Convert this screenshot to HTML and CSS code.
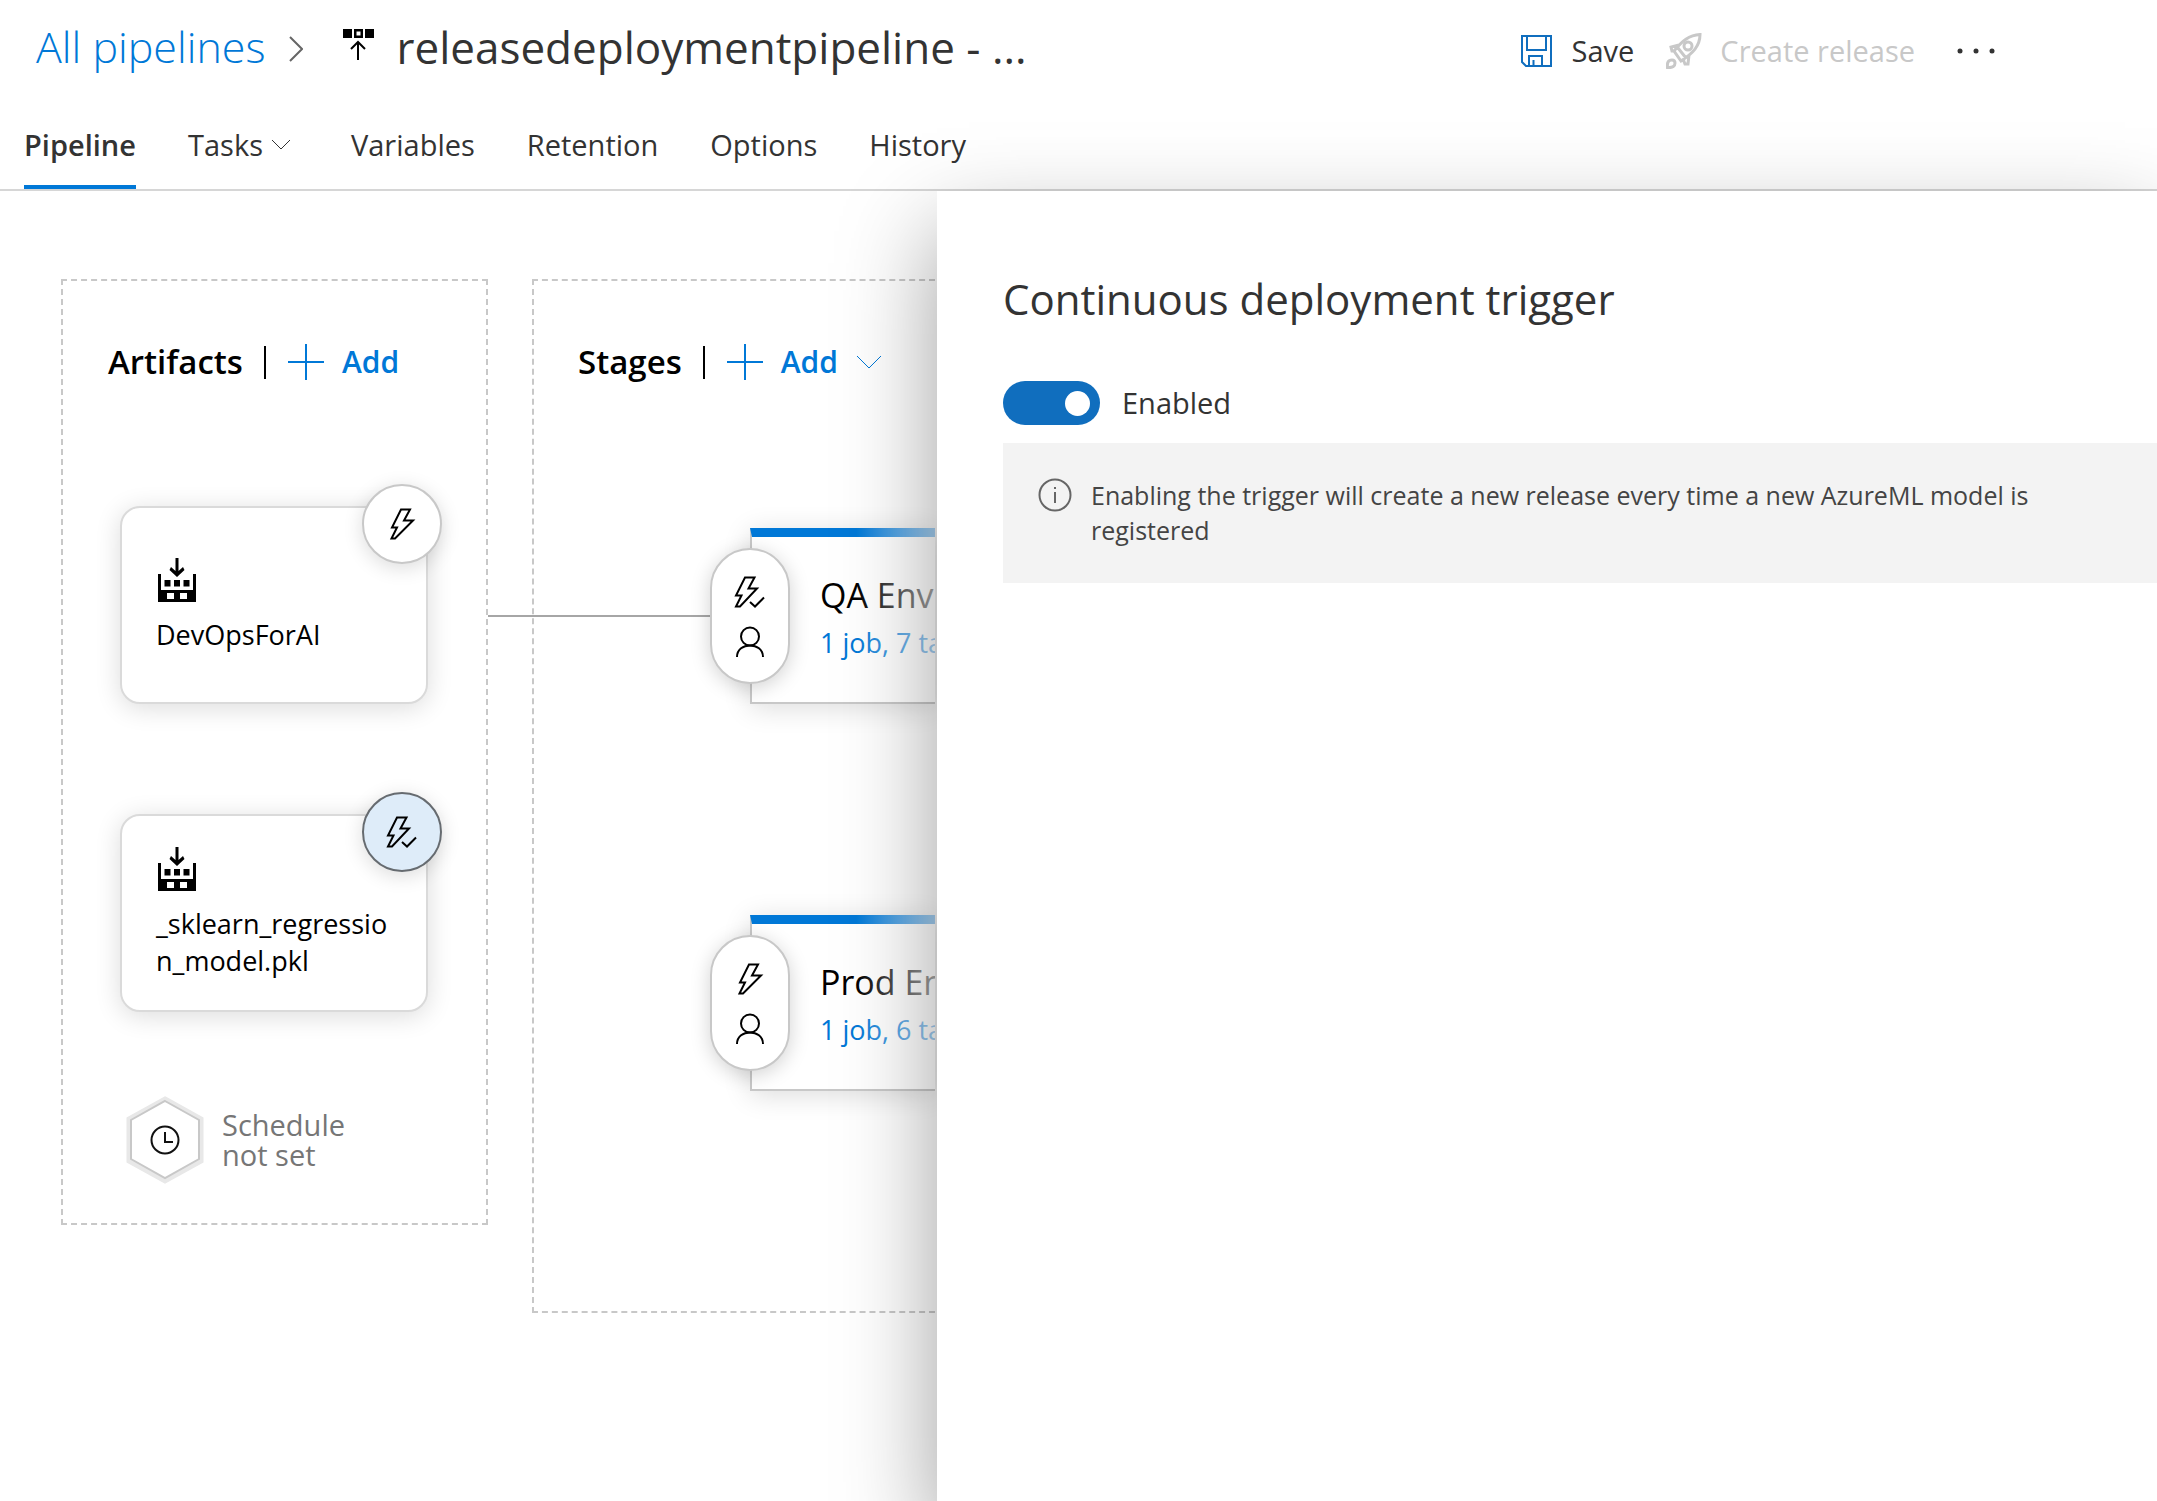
FILE: index.html
```html
<!DOCTYPE html>
<html lang="en">
<head>
<meta charset="utf-8">
<title>releasedeploymentpipeline</title>
<link rel="stylesheet" href="styles.css">
</head>
<body>
<svg class="sprite" aria-hidden="true">
  <symbol id="bolt" viewBox="-4 0 32 32"><path d="M11 1.500H20L14 12.500H23L5 30.500H1.500L7 19.500H2Z"/></symbol>
  <symbol id="bolt-check" viewBox="0 0 32 32"><path d="M11 1.500H20.500L14.500 12.500H23L6 30.500H2L7.500 19.500H2ZM16 26L21 30.500L30 21.500"/></symbol>
  <symbol id="person" viewBox="0 0 32 32"><circle cx="16" cy="10.500" r="9"/><path d="M3 31C3 15.500 29 15.500 29 31"/></symbol>
  <symbol id="plus" viewBox="0 0 36 36"><path d="M18 0V36M0 18H36"/></symbol>
  <symbol id="build" viewBox="0 0 38 44"><path d="M17.500 0H20.500V13L25 9L26.500 12L19 19L11.500 12L13 9L17.500 13ZM0 16H3V32H35V16H38V44H0ZM6.500 22H12.500V28.500H6.500ZM16 22H22V28.500H16ZM25.500 22H31.500V28.500H25.500ZM9 35V41H16V35ZM22 35V41H29V35Z" fill-rule="evenodd"/></symbol>
</svg>
<header class="header">
  <div class="title-row">
    <nav class="crumbs" aria-label="Breadcrumb">
      <a class="crumb-link" href="#">All pipelines</a>
      <svg class="crumb-sep" viewBox="0 0 14 26"><path d="M1 1L13 13L1 25"/></svg>
      <svg class="release-icon" viewBox="0 0 31 32"><path d="M0 0H9V9H0ZM22 0H31V9H22ZM11 0H20V9H11ZM13.500 2.500V6.500H17.500V2.500Z" fill-rule="evenodd"/><path class="line" d="M15 31V14M8 20L15 13L22 20"/></svg>
      <h1 class="title">releasedeploymentpipeline - ...</h1>
    </nav>
    <div class="commands">
      <button class="command" type="button"><svg class="save-icon" viewBox="0 0 31 32"><path d="M1 1H30V31H5L1 27ZM6 1V15H25V1M8 31V21H21V31M12.500 31V25"/></svg>Save</button>
      <button class="command" type="button" disabled><svg class="rocket-icon" viewBox="0 0 36 36"><path d="M34 1.500C23 2 16 8 8 18L15 28C27 20 34 13 34 1.500ZM13 12L5 14L6 18H9M23 22L22 31H19L17 26M12 15L20 25M6 27C2 27 1 30 1.500 34.500C7 35 9 33 9 30C9 28 8 27 6 27Z"/><circle cx="22" cy="13" r="4"/></svg>Create release</button>
      <button class="more" type="button" aria-label="More actions"><svg class="dots" viewBox="0 0 38 6"><circle cx="3" cy="3" r="2.500"/><circle cx="19" cy="3" r="2.500"/><circle cx="35" cy="3" r="2.500"/></svg></button>
    </div>
  </div>
  <nav class="tabs" aria-label="Pipeline sections">
    <a class="tab active" href="#">Pipeline</a>
    <a class="tab" href="#">Tasks<svg class="tab-chevron" viewBox="0 0 20 11"><path d="M1 1L10 10L19 1"/></svg></a>
    <a class="tab" href="#">Variables</a>
    <a class="tab" href="#">Retention</a>
    <a class="tab" href="#">Options</a>
    <a class="tab" href="#">History</a>
  </nav>
</header>
<main class="main">
  <div class="canvas">
    <section class="lane artifacts">
      <div class="lane-head">
        <h2 class="lane-title">Artifacts</h2>
        <button class="add" type="button"><svg class="plus"><use href="#plus"/></svg>Add</button>
      </div>
      <div class="artifact">
        <svg class="build"><use href="#build"/></svg>
        <span class="artifact-name">DevOpsForAI</span>
        <button class="trigger" type="button" aria-label="Continuous deployment trigger"><svg class="glyph"><use href="#bolt"/></svg></button>
      </div>
      <div class="artifact">
        <svg class="build"><use href="#build"/></svg>
        <span class="artifact-name">_sklearn_regression_model.pkl</span>
        <button class="trigger selected" type="button" aria-label="Continuous deployment trigger"><svg class="glyph"><use href="#bolt-check"/></svg></button>
      </div>
      <button class="schedule" type="button">
        <svg class="hexagon" viewBox="0 0 78 88"><path class="halo" d="M39 3L75 23V65L39 85L3 65V23Z"/><path class="edge" d="M39 5L73 24V63L39 82L5 63V24Z"/><circle cx="39" cy="44" r="13.500"/><path class="hands" d="M39 36V46H47"/></svg>
        <span class="schedule-text">Schedule<br>not set</span>
      </button>
    </section>
    <div class="connector"></div>
    <section class="lane stages">
      <div class="lane-head">
        <h2 class="lane-title">Stages</h2>
        <button class="add" type="button"><svg class="plus"><use href="#plus"/></svg>Add<svg class="add-chevron" viewBox="0 0 26 14"><path d="M1 1L13 13L25 1"/></svg></button>
      </div>
      <div class="stage">
        <div class="conditions"><svg class="glyph"><use href="#bolt-check"/></svg><svg class="glyph"><use href="#person"/></svg></div>
        <h3 class="stage-name">QA Env</h3>
        <a class="stage-link" href="#">1 job, 7 ta</a>
      </div>
      <div class="stage">
        <div class="conditions"><svg class="glyph"><use href="#bolt"/></svg><svg class="glyph"><use href="#person"/></svg></div>
        <h3 class="stage-name">Prod En</h3>
        <a class="stage-link" href="#">1 job, 6 ta</a>
      </div>
    </section>
  </div>
  <aside class="panel">
    <h2 class="panel-title">Continuous deployment trigger</h2>
    <label class="toggle"><input class="switch" type="checkbox" role="switch" checked>Enabled</label>
    <div class="notice">
      <svg class="info" viewBox="0 0 34 34"><circle cx="17" cy="17" r="15.500"/><path d="M17 14V25M17 9V11"/></svg>
      <p class="notice-text">Enabling the trigger will create a new release every time a new AzureML model is registered</p>
    </div>
  </aside>
</main>
</body>
</html>
```
FILE: styles.css
```css
* { box-sizing: border-box; }

body {
  margin: 0;
  min-height: 100vh;
  display: flex;
  flex-direction: column;
  overflow: hidden;
  background: #fff;
  color: #333;
  font: 29px/36px "Open Sans", "Noto Sans", sans-serif;
}

svg { flex: none; fill: none; stroke: currentColor; stroke-width: 2; }
h1, h2, h3, p { margin: 0; font-weight: 400; }
a { color: inherit; text-decoration: none; }
button { padding: 0; border: 0; background: none; color: inherit; font: inherit; display: flex; align-items: center; }
.sprite { position: absolute; width: 0; height: 0; }

/* Header */
.header { border-bottom: 2px solid #d6d6d6; }
.title-row { display: flex; justify-content: space-between; align-items: center; height: 94px; padding: 0 162px 0 36px; }
.crumbs { display: flex; align-items: center; font-size: 44px; line-height: 56px; white-space: nowrap; }
.crumb-link { color: #0078d7; font-size: 43px; font-weight: 300; }
.crumb-sep { width: 14px; height: 26px; margin: 4px 40px 0 24px; stroke: #666; }
.release-icon { width: 31px; height: 32px; margin: 0 22px 4px 0; fill: #000; stroke: none; }
.release-icon .line { fill: none; stroke: #000; stroke-width: 2; }
.title { font-size: 44px; }
.commands { display: flex; align-items: center; padding-top: 8px; gap: 32px; }
.command { gap: 20px; }
.command:disabled { color: #c8c8c8; gap: 18px; }
.save-icon { width: 31px; height: 32px; color: #106ebe; }
.rocket-icon { width: 36px; height: 36px; stroke-width: 3; }
.dots { width: 38px; height: 6px; margin-left: 10px; fill: #333; stroke: none; }
.tabs { display: flex; gap: 52px; padding-left: 24px; }
.tab { display: flex; align-items: center; height: 95px; padding: 10px 0 4px; }
.tab.active { border-bottom: 4px solid #0078d7; padding-bottom: 0; font-weight: 600; }
.tab-chevron { width: 20px; height: 11px; margin: 0 8px; stroke-width: 1; }

/* Canvas */
.main { flex: 1; display: grid; grid-template-columns: minmax(0, 937fr) minmax(0, 1220fr); }
.canvas { display: flex; align-items: flex-start; padding: 88px 2px 88px 61px; overflow: hidden; color: #000; }
.lane { border: 2px dashed #c8c8c8; }
.artifacts { flex: none; width: 427px; padding: 58px 56px 39px 57px; }
.stages { flex: 1; min-width: 0; height: 1034px; padding: 58px 0 0 44px; border-right: 0; white-space: nowrap; }
.connector { flex: none; width: 222px; margin: 336px -178px 0 0; border-top: 2px solid #a6a6a6; }
.lane-head { display: flex; align-items: center; height: 48px; padding-bottom: 2px; margin-left: -12px; }
.stages .lane-head { margin-left: 0; }
.lane-title { font-size: 33px; font-weight: 600; }
.add { margin-left: 21px; color: #0078d7; font-size: 30px; font-weight: 600; }
.add::before { content: ""; width: 2px; height: 33px; margin-right: 22px; background: #000; }
.plus { width: 36px; height: 36px; margin-right: 18px; }
.add-chevron { width: 26px; height: 14px; margin-left: 18px; stroke-width: 1; }

.artifact {
  position: relative;
  display: flex;
  flex-direction: column;
  justify-content: center;
  width: 308px;
  height: 198px;
  margin-top: 110px;
  padding: 0 30px 0 34px;
  border: 2px solid #dadada;
  border-radius: 20px;
  background: #fff;
  box-shadow: 0 4px 26px rgba(0, 0, 0, .14);
}
.lane-head + .artifact { margin-top: 119px; }
.build { width: 38px; height: 44px; margin: 0 0 14px 2px; fill: #000; stroke: none; }
.artifact-name { font-size: 27px; line-height: 37px; overflow-wrap: anywhere; }
.trigger {
  position: absolute;
  top: -24px;
  right: -16px;
  width: 80px;
  height: 80px;
  justify-content: center;
  border: 2px solid #c8c8c8;
  border-radius: 50%;
  background: #fff;
  box-shadow: 0 4px 20px rgba(0, 0, 0, .14);
}
.trigger.selected { background: #deecf9; border-color: #666b70; }
.glyph { width: 32px; height: 32px; }
.schedule { gap: 18px; margin: 84px 0 0 6px; text-align: left; color: #767676; }
.schedule-text { line-height: 30px; }
.hexagon { width: 78px; height: 88px; color: #111; }
.halo { stroke: #e8e8e8; stroke-width: 5; }
.edge { stroke: #c8c8c8; fill: #fff; }

/* Stages */
.stage {
  position: relative;
  height: 176px;
  margin: 141px 0 0 172px;
  padding: 34px 0 0 68px;
  border: 2px solid #c8c8c8;
  border-width: 9px 0 2px 2px;
  border-top-color: #0078d7;
  background: #fff;
  box-shadow: 0 4px 26px rgba(0, 0, 0, .14);
}
.stage + .stage { margin-top: 211px; }
.stage::after {
  content: "";
  position: absolute;
  inset: -9px 0 0 104px;
  background: linear-gradient(to right, rgba(255, 255, 255, 0), rgba(255, 255, 255, .65));
}
.conditions {
  position: absolute;
  top: 11px;
  left: -42px;
  display: flex;
  flex-direction: column;
  align-items: center;
  justify-content: center;
  gap: 18px;
  width: 80px;
  height: 136px;
  padding-top: 2px;
  border: 2px solid #c8c8c8;
  border-radius: 40px;
  background: #fff;
  box-shadow: 0 4px 20px rgba(0, 0, 0, .18);
}
.stage-name { font-size: 34px; line-height: 48px; overflow: hidden; }
.stage-link { display: block; font-size: 27px; line-height: 48px; overflow: hidden; color: #0078d7; }

/* Details panel */
.panel {
  z-index: 1;
  padding: 80px 0 0 66px;
  background: #fff;
  box-shadow: 0 40px 90px rgba(0, 0, 0, .38);
}
.panel-title { font-size: 42px; line-height: 56px; }
.toggle { display: flex; align-items: center; gap: 22px; margin: 54px 0 18px; }
.switch {
  appearance: none;
  display: flex;
  align-items: center;
  justify-content: flex-end;
  width: 97px;
  height: 44px;
  margin: 0;
  padding: 10px;
  border-radius: 22px;
  background: #106ebe;
}
.switch::before { content: ""; width: 25px; height: 25px; border-radius: 50%; background: #fff; }
.notice { display: flex; gap: 19px; height: 140px; padding: 35px 100px 0 35px; background: #f3f3f3; }
.info { width: 34px; height: 34px; stroke: #666; }
.notice-text { font-size: 25px; line-height: 35px; color: #444; }
```
